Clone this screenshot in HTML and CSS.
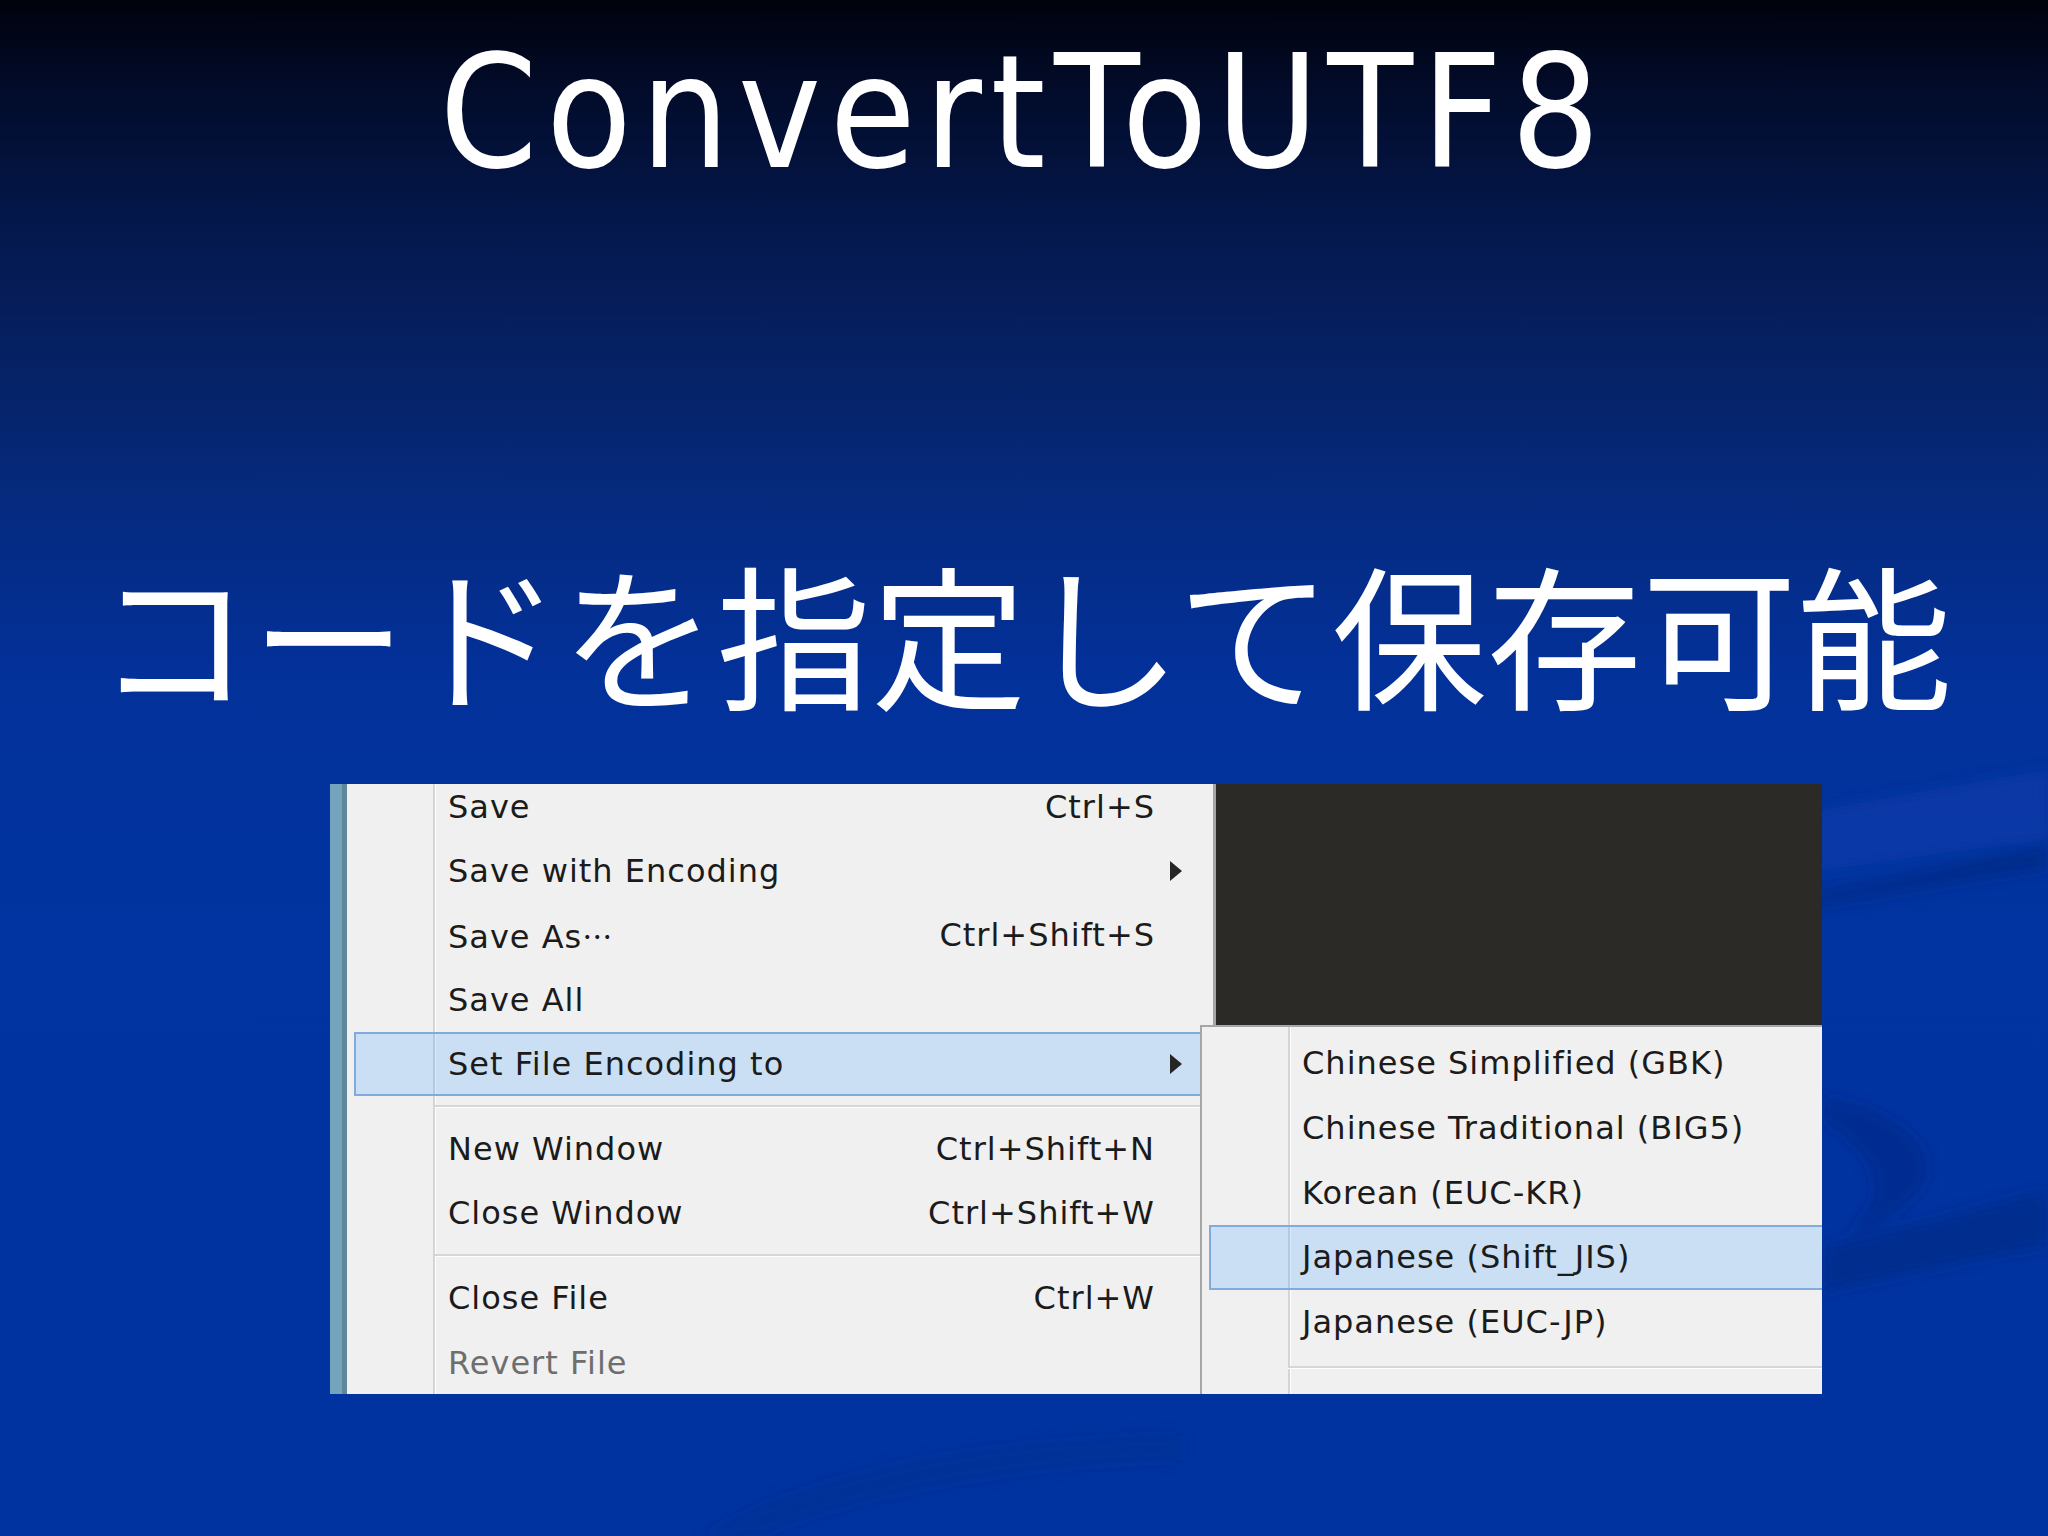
FILE: index.html
```html
<!DOCTYPE html>
<html lang="ja">
<head>
<meta charset="utf-8">
<title>ConvertToUTF8</title>
<link rel="stylesheet" href="styles.css">
</head>
<body>
<div class="slide">
  <svg class="deco" viewBox="0 0 2048 1536" preserveAspectRatio="none" aria-hidden="true">
    <defs>
      <filter id="soft" x="-20%" y="-20%" width="140%" height="140%">
        <feGaussianBlur stdDeviation="7"/>
      </filter>
    </defs>
    <g filter="url(#soft)">
      <path d="M1760,820 C1880,800 1980,780 2048,770 L2048,840 C1960,850 1880,862 1760,880 Z" fill="#1446b8" opacity="0.35"/>
      <path d="M1780,900 C1900,878 1980,858 2048,845 L2048,868 C1980,878 1900,892 1780,912 Z" fill="#00287e" opacity="0.6"/>
      <path d="M1823,1097 C1900,1110 1945,1150 1920,1190 C1900,1215 1870,1228 1847,1232 C1880,1205 1895,1170 1823,1120 Z" fill="#00297f" opacity="0.45"/>
      <path d="M1823,1247 C1900,1228 1980,1208 2048,1190 L2048,1246 C1980,1258 1900,1275 1823,1292 Z" fill="#002a80" opacity="0.55"/>
      <path d="M700,1536 C820,1470 980,1440 1180,1436 L1180,1460 C990,1466 840,1500 760,1536 Z" fill="#002a82" opacity="0.3"/>
    </g>
  </svg>

  <h1 class="title">ConvertToUTF8</h1>
  <p class="subtitle">コードを指定して保存可能</p>

  <div class="shot">
    <div class="menu">
      <div class="list">
        <div class="row"><span class="label">Save</span><span class="key">Ctrl+S</span><span class="arrow-cell"></span></div>
        <div class="row"><span class="label">Save with Encoding</span><span class="key"></span><span class="arrow-cell"><span class="arrow"></span></span></div>
        <div class="row"><span class="label">Save As<span class="ell">…</span></span><span class="key">Ctrl+Shift+S</span><span class="arrow-cell"></span></div>
        <div class="row"><span class="label">Save All</span><span class="key"></span><span class="arrow-cell"></span></div>
        <div class="row hl"><span class="label">Set File Encoding to</span><span class="key"></span><span class="arrow-cell"><span class="arrow"></span></span></div>
        <div class="sep"><span class="line"></span></div>
        <div class="row"><span class="label">New Window</span><span class="key">Ctrl+Shift+N</span><span class="arrow-cell"></span></div>
        <div class="row"><span class="label">Close Window</span><span class="key">Ctrl+Shift+W</span><span class="arrow-cell"></span></div>
        <div class="sep"><span class="line"></span></div>
        <div class="row"><span class="label">Close File</span><span class="key">Ctrl+W</span><span class="arrow-cell"></span></div>
        <div class="row disabled"><span class="label">Revert File</span><span class="key"></span><span class="arrow-cell"></span></div>
      </div>
    </div>

    <div class="submenu">
      <div class="srow"><span class="label">Chinese Simplified (GBK)</span></div>
      <div class="srow"><span class="label">Chinese Traditional (BIG5)</span></div>
      <div class="srow"><span class="label">Korean (EUC-KR)</span></div>
      <div class="srow hl"><span class="label">Japanese (Shift_JIS)</span></div>
      <div class="srow"><span class="label">Japanese (EUC-JP)</span></div>
      <div class="ssep"><span class="line"></span></div>
    </div>
  </div>
</div>
</body>
</html>
```

FILE: styles.css
```css
html, body {
  margin: 0;
  padding: 0;
}

body {
  width: 2048px;
  height: 1536px;
  overflow: hidden;
}

.slide {
  position: relative;
  width: 2048px;
  height: 1536px;
  overflow: hidden;
  display: flex;
  flex-direction: column;
  background: linear-gradient(to bottom,
    #00020c 0%,
    #020a26 5%,
    #04174a 14%,
    #062265 24%,
    #052b82 34%,
    #03319a 44%,
    #0134a0 60%,
    #0033a0 100%);
}

.deco {
  position: absolute;
  left: 0;
  top: 0;
  width: 2048px;
  height: 1536px;
  z-index: 0;
}

.title {
  position: relative;
  z-index: 1;
  margin: 0;
  padding-top: 36px;
  font-family: "DejaVu Sans Condensed", "DejaVu Sans", sans-serif;
  font-stretch: condensed;
  font-weight: normal;
  font-size: 156px;
  line-height: 155px;
  letter-spacing: 8.5px;
  color: #ffffff;
  text-align: center;
}

.subtitle {
  position: relative;
  z-index: 1;
  margin: 362px 0 0 0;
  font-family: "Noto Sans CJK JP", "Noto Sans", sans-serif;
  font-weight: 400;
  font-size: 155px;
  line-height: 155px;
  color: #ffffff;
  text-align: center;
}

.shot {
  position: relative;
  z-index: 1;
  margin: 76px 0 0 330px;
  width: 1492px;
  height: 610px;
  overflow: hidden;
  background: #2b2a26;
  font-family: "DejaVu Sans", sans-serif;
  font-size: 32px;
  letter-spacing: 1px;
  color: #1b1b1b;
}

.menu {
  box-sizing: border-box;
  width: 886px;
  height: 610px;
  overflow: hidden;
  border-right: 3px solid #a5a5a5;
  background: linear-gradient(to right,
    #74a3bd 0, #74a3bd 12px,
    #5f8799 12px, #5f8799 17px,
    #f0f0f0 17px, #f0f0f0 103px,
    #d5d5d5 103px, #d5d5d5 105px,
    #ffffff 105px, #ffffff 106px,
    #f0f0f0 106px);
}

.list {
  margin-top: -9px;
  display: flex;
  flex-direction: column;
}

.row {
  box-sizing: border-box;
  height: 64.2px;
  margin: 0 3px 0 24px;
  padding-left: 92px;
  border: 2px solid transparent;
  display: flex;
  align-items: center;
  white-space: nowrap;
}

.row .label {
  flex: 1;
}

.row .key {
  text-align: right;
}

.arrow-cell {
  width: 53px;
  box-sizing: border-box;
  padding-left: 15px;
  display: flex;
  align-items: center;
}

.arrow {
  width: 0;
  height: 0;
  border-left: 12px solid #262626;
  border-top: 10px solid transparent;
  border-bottom: 10px solid transparent;
}

.disabled {
  color: #6e6e6e;
}

.ell {
  font-family: "Noto Sans CJK JP", sans-serif;
  letter-spacing: 0;
  font-size: 30px;
}

.sep {
  height: 21px;
  margin-left: 105px;
  display: flex;
  align-items: center;
}

.line {
  display: block;
  width: 100%;
  height: 2px;
  background: #d6d6d6;
  border-bottom: 1px solid #ffffff;
}

.submenu {
  position: absolute;
  left: 870px;
  top: 241px;
  right: 0;
  bottom: 0;
  padding-top: 4px;
  border-top: 2px solid #a6a6a6;
  border-left: 2px solid #a6a6a6;
  background: linear-gradient(to right,
    #f0f0f0 0, #f0f0f0 86px,
    #d5d5d5 86px, #d5d5d5 88px,
    #ffffff 88px, #ffffff 89px,
    #f0f0f0 89px);
  display: flex;
  flex-direction: column;
}

.srow {
  box-sizing: border-box;
  height: 64.7px;
  margin-left: 7px;
  margin-right: -4px;
  padding-left: 91px;
  border: 2px solid transparent;
  display: flex;
  align-items: center;
  white-space: nowrap;
}

.row.hl,
.srow.hl {
  background: rgba(51, 153, 255, 0.2);
  border-color: #80abdc;
}

.ssep {
  height: 26px;
  margin-left: 86px;
  display: flex;
  align-items: center;
}
```
